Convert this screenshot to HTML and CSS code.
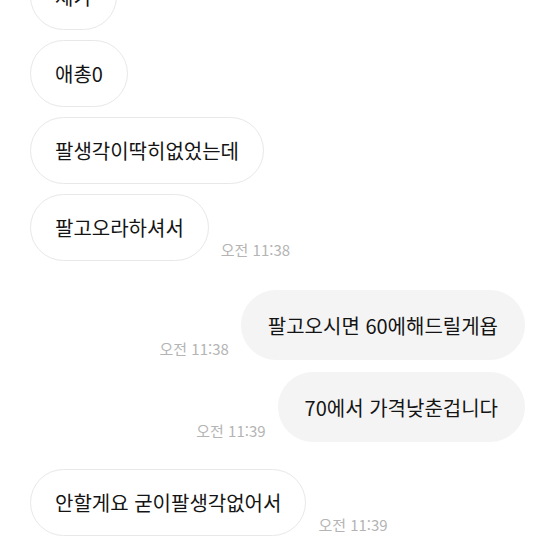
FILE: index.html
```html
<!DOCTYPE html>
<html lang="ko">
<head>
    <meta charset="UTF-8">
    <meta name="viewport" content="width=device-width, initial-scale=1.0">
    <title>채팅</title>
    <link rel="stylesheet" href="styles.css">
</head>
<body>
    <div class="chat">
        <div class="row">
            <div class="bubble">제가</div>
        </div>
        <div class="row">
            <div class="bubble">애총0</div>
        </div>
        <div class="row">
            <div class="bubble">팔생각이딱히없었는데</div>
        </div>
        <div class="row">
            <div class="bubble">팔고오라하셔서</div>
            <span class="time">오전 11:38</span>
        </div>
        <div class="row mine first-mine">
            <span class="time">오전 11:38</span>
            <div class="bubble">팔고오시면 60에해드릴게욥</div>
        </div>
        <div class="row mine">
            <span class="time">오전 11:39</span>
            <div class="bubble">70에서 가격낮춘겁니다</div>
        </div>
        <div class="row first-theirs">
            <div class="bubble">안할게요 굳이팔생각없어서</div>
            <span class="time">오전 11:39</span>
        </div>
    </div>
</body>
</html>
```

FILE: styles.css
```css
body {
    margin: 0;
    padding: 0;
    background-color: #ffffff;
    font-family: "Noto Sans CJK KR", "Noto Sans", sans-serif;
    color: #141414;
    overflow: hidden;
}
.chat {
    display: flex;
    flex-direction: column;
    gap: 10px;
    padding: 0 30px;
    margin-top: -37px;
}
.row {
    display: flex;
    align-items: flex-end;
    gap: 12px;
}
.row.mine {
    justify-content: flex-end;
    margin-top: 2px;
}
.row.first-mine {
    margin-top: 19px;
}
.row.first-theirs {
    margin-top: 17px;
}
.bubble {
    font-size: 20px;
    font-weight: 400;
    line-height: 25px;
    padding: 20px 24px;
    border: 1px solid #e8e8e8;
    border-radius: 35px;
    background-color: #ffffff;
    white-space: nowrap;
}
.mine .bubble {
    padding: 22px 26px 21px;
    background-color: #f4f4f4;
    border-color: #f4f4f4;
}
.time {
    font-size: 15px;
    color: #b4b4b4;
    padding-bottom: 1px;
    white-space: nowrap;
}
```
